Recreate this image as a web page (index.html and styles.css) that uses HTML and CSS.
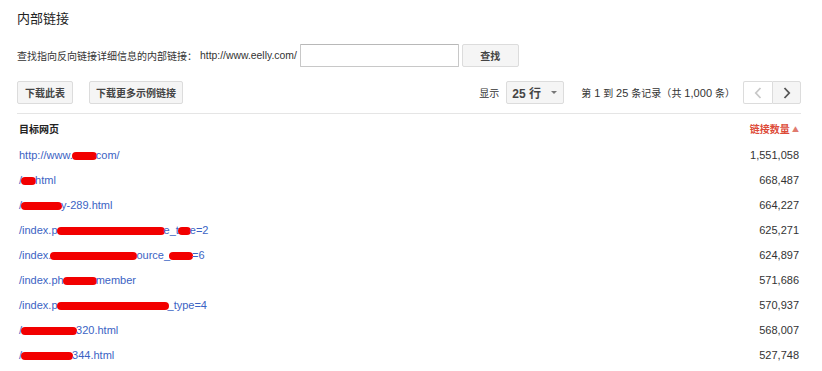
FILE: index.html
```html
<!DOCTYPE html>
<html lang="zh-CN">
<head>
    <meta charset="UTF-8">
    <meta name="viewport" content="width=device-width, initial-scale=1.0">
    <title>内部链接</title>
    <link rel="stylesheet" href="styles.css">
</head>
<body>
    <div class="page">
        <h1>内部链接</h1>

        <form class="search">
            <span class="cn">查找指向反向链接详细信息的内部链接：</span>
            <span class="site">http://www.eelly.com/</span>
            <input type="text" class="search-input">
            <button type="button" class="btn btn-find">查找</button>
        </form>

        <div class="toolbar">
            <div class="toolbar-left">
                <button type="button" class="btn">下载此表</button>
                <button type="button" class="btn btn-more">下载更多示例链接</button>
            </div>
            <div class="toolbar-right">
                <span class="cn">显示</span>
                <div class="select">
                    <span>25 <span class="cn-big">行</span></span>
                    <span class="caret"></span>
                </div>
                <span class="cn count">第 <b>1</b> 到 <b>25</b> 条记录（共 <b>1,000</b> 条）</span>
                <div class="pager">
                    <button type="button" class="page-btn prev" disabled>
                        <svg width="8" height="12" viewBox="0 0 8 12"><path d="M6.5 1 L1.8 6 L6.5 11" fill="none" stroke="#c8c8c8" stroke-width="1.8"/></svg>
                    </button>
                    <button type="button" class="page-btn next">
                        <svg width="8" height="12" viewBox="0 0 8 12"><path d="M1.5 1 L6.2 6 L1.5 11" fill="none" stroke="#555" stroke-width="1.8"/></svg>
                    </button>
                </div>
            </div>
        </div>

        <table class="links">
            <thead>
                <tr>
                    <th class="col-page">目标网页</th>
                    <th class="col-count">链接数量 <span class="sort">▲</span></th>
                </tr>
            </thead>
            <tbody id="link-table">
                <!-- rows filled by script -->
            </tbody>
        </table>
    </div>

    <script>
        // each url is split into pieces; numbers are widths of the red marks
        const rows = [
            { url: ['http://www.', 25, 'com/'], links: '1,551,058' },
            { url: ['/', 15, 'html'], links: '668,487' },
            { url: ['/', 41, 'y-289.html'], links: '664,227' },
            { url: ['/index.p', 108, 'e_t', 13, 'e=2'], links: '625,271' },
            { url: ['/index.', 87, 'ource_', 24, '=6'], links: '624,897' },
            { url: ['/index.ph', 34, 'member'], links: '571,686' },
            { url: ['/index.p', 112, '_type=4'], links: '570,937' },
            { url: ['/', 56, '320.html'], links: '568,007' },
            { url: ['/', 52, '344.html'], links: '527,748' },
        ];

        function renderTable(data) {
            const body = document.getElementById('link-table');
            body.innerHTML = '';

            data.forEach(item => {
                const parts = item.url.map(p =>
                    typeof p === 'number'
                        ? `<span class="mask" style="width:${p}px"></span>`
                        : p
                ).join('');
                body.innerHTML += `
                    <tr>
                        <td class="col-page"><a href="#">${parts}</a></td>
                        <td class="col-count">${item.links}</td>
                    </tr>
                `;
            });
        }

        renderTable(rows);
    </script>
</body>
</html>
```

FILE: styles.css
```css
body {
    margin: 0;
    background: #fff;
    color: #222;
    font-family: "Liberation Sans", "Noto Sans CJK SC", sans-serif;
    font-size: 11px;
}

.page {
    padding: 8px 21px 0 17px;
}

h1 {
    margin: 0;
    height: 22px;
    line-height: 22px;
    font-size: 13px;
    font-weight: normal;
    color: #222;
}

.cn {
    font-size: 10px;
    color: #333;
}

.cn-big {
    font-size: 12px;
}

/* search row */
.search {
    display: flex;
    align-items: center;
    height: 23px;
    margin-top: 14px;
}

.site {
    margin-left: 3px;
    color: #333;
    font-size: 10.4px;
}

.search-input {
    box-sizing: border-box;
    width: 159px;
    height: 23px;
    margin: 0 3px 0 3px;
    padding: 0 4px;
    border: 1px solid #c8c8c8;
    border-top-color: #b8b8b8;
    border-radius: 1px;
    outline: none;
}

.btn {
    box-sizing: border-box;
    height: 23px;
    padding: 0 7px;
    border: 1px solid #dcdcdc;
    border-radius: 2px;
    background: #f5f5f5;
    color: #444;
    font-family: "Noto Sans CJK SC", sans-serif;
    font-size: 10px;
    font-weight: bold;
    cursor: pointer;
}

.btn-find {
    width: 57px;
}

/* toolbar */
.toolbar {
    display: flex;
    justify-content: space-between;
    align-items: center;
    height: 23px;
    margin-top: 14px;
    padding-bottom: 9px;
    border-bottom: 1px solid #e5e5e5;
}

.toolbar-left {
    display: flex;
    gap: 16px;
}

.btn-more {
    padding: 0 6px;
}

.toolbar-right {
    display: flex;
    align-items: center;
}

.select {
    box-sizing: border-box;
    display: flex;
    align-items: center;
    justify-content: space-between;
    width: 58px;
    height: 23px;
    margin-left: 7px;
    padding: 0 6px 0 5px;
    border: 1px solid #dcdcdc;
    border-radius: 2px;
    background: #f5f5f5;
    color: #444;
    font-size: 12px;
    font-weight: bold;
}

.caret {
    width: 0;
    height: 0;
    border-left: 3px solid transparent;
    border-right: 3px solid transparent;
    border-top: 3px solid #777;
}

.count {
    margin: 0 8px 0 17px;
    letter-spacing: 0.05px;
}

.count b {
    font-family: "Liberation Sans", sans-serif;
    font-size: 11px;
    font-weight: normal;
}

.pager {
    display: flex;
}

.page-btn {
    box-sizing: border-box;
    display: flex;
    align-items: center;
    justify-content: center;
    width: 29px;
    height: 23px;
    padding: 0;
    border: 1px solid #dcdcdc;
    background: #f5f5f5;
    cursor: pointer;
}

.page-btn.prev {
    background: #fff;
    border-right: none;
    border-radius: 2px 0 0 2px;
    cursor: default;
}

.page-btn.next {
    border-radius: 0 2px 2px 0;
}

/* table */
.links {
    width: 100%;
    border-collapse: collapse;
}

.links th {
    height: 28px;
    padding: 0 2px;
    font-family: "Noto Sans CJK SC", sans-serif;
    font-size: 10px;
    font-weight: bold;
    color: #222;
}

.links td {
    height: 25px;
    padding: 0 2px;
    color: #333;
}

.col-page {
    text-align: left;
}

.col-count {
    text-align: right;
}

th.col-count {
    color: #dd4b39;
}

.sort {
    font-size: 7px;
    color: #e07a6e;
    vertical-align: 1px;
}

.links a {
    color: #3b63c4;
    text-decoration: none;
}

.mask {
    display: inline-block;
    height: 8px;
    margin: 0 -1px;
    border-radius: 5px;
    background: #f20000;
    vertical-align: -1px;
}
```
